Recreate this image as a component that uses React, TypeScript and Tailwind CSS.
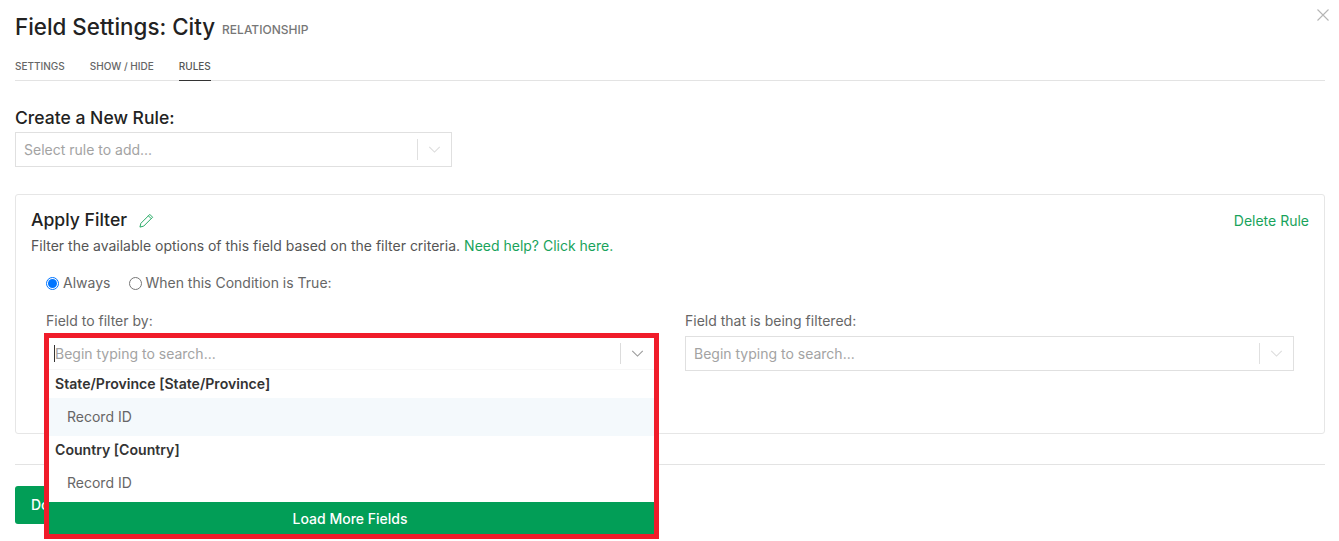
import React from 'react';

const Chevron = ({ className }: { className: string }) => (
  <svg viewBox="0 0 14 8" className={className} fill="none" stroke="currentColor" strokeWidth="1.2">
    <path d="M1 1l6 6 6-6" />
  </svg>
);

const SelectBox = ({ placeholder, className }: { placeholder?: string; className: string }) => (
  <div className={`flex items-center border border-[#e0e0e0] bg-white ${className}`}>
    <span className="flex-1 pl-2 text-sm text-[#a3a3a3]">{placeholder}</span>
    <span className="h-[21px] w-px bg-[#e0e0e0]" />
    <span className="flex w-[33px] justify-center">
      <Chevron className="h-[7px] w-[13px] text-[#dcdcdc]" />
    </span>
  </div>
);

export default function App() {
  return (
    <div className="relative h-[541px] w-[1339px] overflow-hidden bg-white font-['Inter',sans-serif] text-[#333]">
      <div className="absolute right-[10px] top-[9px] text-[#b5b5b5]">
        <svg viewBox="0 0 12 12" className="h-3 w-3" fill="none" stroke="currentColor" strokeWidth="1.1">
          <path d="M0.5 0.5l11 11M11.5 0.5l-11 11" />
        </svg>
      </div>

      <div className="flex flex-col pl-[15px] pr-[14px]">
        <div className="flex h-[53px] items-center pt-[1px]">
          <h1 className="text-[22.35px] font-medium leading-none text-[#222]">Field Settings: City</h1>
          <span className="ml-[7px] mt-[6px] text-xs font-medium text-[#777]">RELATIONSHIP</span>
        </div>

        <div className="flex h-[28px] gap-[25px] border-b border-[#e3e3e3] text-[10px] font-medium text-[#666]">
          <span className="pt-[6px]">SETTINGS</span>
          <span className="pt-[6px]">SHOW / HIDE</span>
          <span className="-mb-px border-b border-[#333] pt-[6px] text-[#555]">RULES</span>
        </div>

        <h2 className="mt-[26px] text-[17.55px] font-medium leading-[22px] text-[#222]">Create a New Rule:</h2>
        <SelectBox placeholder="Select rule to add..." className="mt-[3px] h-[35px] w-[437px]" />

        <div className="mt-[27px] flex h-[240px] flex-col rounded-[3px] border border-[#e6e6e6] pl-[15px] pr-[15px]">
          <div className="flex h-[38px] items-end justify-between">
            <div className="flex items-center gap-[12px]">
              <h3 className="text-[17.6px] font-medium leading-[26px] text-[#222]">Apply Filter</h3>
              <svg viewBox="0 0 16 16" className="h-[15px] w-[15px] text-[#19a35b]" fill="none" stroke="currentColor" strokeWidth="1">
                <path d="M11.5 1.5l3 3-9.5 9.5-4 1 1-4zM10 3l3 3" />
              </svg>
            </div>
            <a className="pb-[2px] text-sm text-[#19a35b]">Delete Rule</a>
          </div>
          <p className="mt-[3px] text-sm leading-5 text-[#555]">
            Filter the available options of this field based on the filter criteria.{' '}
            <a className="text-[#19a35b]">Need help? Click here.</a>
          </p>

          <div className="mt-[17px] flex items-center pl-[15px] text-sm leading-5 text-[#666]">
            <span className="flex h-[13px] w-[13px] items-center justify-center rounded-full border border-[#0075ff]">
              <span className="h-[9px] w-[9px] rounded-full bg-[#0075ff]" />
            </span>
            <span className="ml-[4px]">Always</span>
            <span className="ml-[19px] h-[13px] w-[13px] rounded-full border border-[#767676]" />
            <span className="ml-[3px]">When this Condition is True:</span>
          </div>

          <div className="mt-[18px] grid grid-cols-[609px_609px] gap-x-[30px] pl-[15px] text-sm text-[#666]">
            <div>
              <div className="leading-5">Field to filter by:</div>
              <SelectBox className="mt-[5px] h-[35px]" />
            </div>
            <div>
              <div className="leading-5">Field that is being filtered:</div>
              <SelectBox placeholder="Begin typing to search..." className="mt-[5px] h-[35px]" />
            </div>
          </div>
        </div>

        <div className="mt-[30px] border-t border-[#e3e3e3]" />
        <button className="mt-[21px] h-[38px] w-[90px] rounded-[3px] bg-[#029e57] text-left pl-[16px] text-sm font-medium text-white">
          Done
        </button>
      </div>

      {/* Open dropdown with the red highlight round it */}
      <div className="absolute left-[44px] top-[333px] flex h-[206px] w-[615px] flex-col border-[5px] border-[#f01c2a] bg-white">
        <div className="flex h-[32px] items-center border-b border-[#f7f7f7]">
          <span className="ml-[5px] h-[17px] w-px bg-[#333]" />
          <span className="flex-1 text-sm text-[#a3a3a3]">Begin typing to search...</span>
          <span className="h-[21px] w-px bg-[#dcdcdc]" />
          <span className="flex w-[33px] justify-center">
            <Chevron className="h-[7px] w-[13px] text-[#999]" />
          </span>
        </div>
        <div className="flex h-[28px] items-center pl-[6px] text-[14.1px] font-semibold text-[#333]">State/Province [State/Province]</div>
        <div className="flex h-[38px] items-center bg-[#f4f9fc] pl-[18px] text-sm text-[#666]">Record ID</div>
        <div className="flex h-[28px] items-center pl-[6px] text-[14.1px] font-semibold text-[#333]">Country [Country]</div>
        <div className="flex h-[38px] items-center pl-[18px] text-sm text-[#666]">Record ID</div>
        <div className="flex flex-1 items-center justify-center bg-[#029e57] pr-[3px] pt-[1px] text-sm font-medium text-white">Load More Fields</div>
      </div>
    </div>
  );
}
